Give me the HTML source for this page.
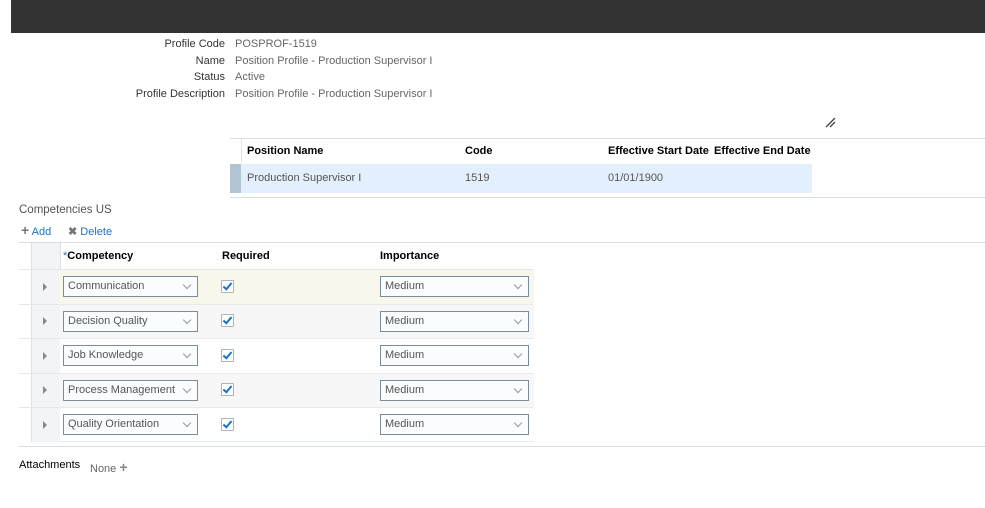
<!DOCTYPE html>
<html><head><style>
body{margin:0;width:985px;height:508px;background:#fff;font-family:"Liberation Sans",sans-serif;font-size:11px;position:relative;overflow:hidden}
.a{position:absolute;white-space:nowrap}
.lbl{color:#333;text-align:right;width:200px;left:25px}
.val{color:#666;left:235px}
.h{font-weight:bold;color:#000;font-size:11px}
.line{position:absolute;height:1px;background:#d6dfe6}
.sel{position:absolute;height:19px;border:1px solid #7a8c98;background:#fbfcfe;color:#555;font-size:11px;line-height:19px;padding-left:4px;box-sizing:content-box}
.sel:after{content:"";position:absolute;right:7px;top:5px;width:5px;height:5px;border-right:1px solid #999;border-bottom:1px solid #999;transform:rotate(45deg)}
.cb{position:absolute;width:11px;height:11px;border:1px solid #a9b4bd;background:#fff;border-radius:1px}
.cb:after{content:"";position:absolute;left:3px;top:0px;width:3px;height:7px;border-right:2px solid #1a73c9;border-bottom:2px solid #1a73c9;transform:rotate(40deg)}
.tri{position:absolute;width:0;height:0;border-left:4px solid #888;border-top:4px solid transparent;border-bottom:4px solid transparent}
</style></head><body>
<div style="position:absolute;left:11px;top:0;width:974px;height:33px;background:#333"></div>
<div class="a lbl" style="top:38px">Profile Code</div><div class="a val" style="top:38px">POSPROF-1519</div>
<div class="a lbl" style="top:55px">Name</div><div class="a val" style="top:55px">Position Profile - Production Supervisor I</div>
<div class="a lbl" style="top:71px">Status</div><div class="a val" style="top:71px">Active</div>
<div class="a lbl" style="top:88px">Profile Description</div><div class="a val" style="top:88px">Position Profile - Production Supervisor I</div>
<svg class="a" style="left:824px;top:116px" width="14" height="13"><path d="M2 11L11 2M6 11L11 6" stroke="#444" stroke-width="1.3"/></svg>
<div class="line" style="left:230px;top:138px;width:755px"></div>
<div class="a" style="left:241px;top:139px;width:1px;height:24px;background:#e3e7ea"></div>
<div class="a h" style="left:247px;top:145px">Position Name</div>
<div class="a h" style="left:465px;top:145px">Code</div>
<div class="a h" style="left:608px;top:145px">Effective Start Date</div>
<div class="a h" style="left:714px;top:145px">Effective End Date</div>
<div class="a" style="left:230px;top:164px;width:582px;height:29px;background:#e3effc"></div>
<div class="a" style="left:230px;top:164px;width:11px;height:29px;background:#b2c4d2"></div>
<div class="a" style="left:247px;top:172px;color:#555">Production Supervisor I</div>
<div class="a" style="left:465px;top:172px;color:#555">1519</div>
<div class="a" style="left:608px;top:172px;color:#555">01/01/1900</div>
<div class="line" style="left:230px;top:197px;width:755px"></div>
<div class="a" style="left:19px;top:204px;color:#555;font-size:11.5px">Competencies US</div>
<div class="a" style="left:21px;top:225px;color:#1a73c9"><span style="color:#777;font-weight:bold;font-size:14px;line-height:10px">+</span> Add</div>
<div class="a" style="left:68px;top:225px;color:#1a73c9"><span style="color:#777;font-weight:bold">✖</span> Delete</div>
<div class="line" style="left:19px;top:242px;width:966px"></div>
<div class="a" style="left:31px;top:243px;width:28px;height:199px;background:#f3f4f5;border-left:1px solid #dde2e6;border-right:1px solid #dde2e6"></div>
<div class="a h" style="left:63px;top:250px"><span style="color:#1a73c9;font-weight:normal">*</span>Competency</div>
<div class="a h" style="left:222px;top:250px">Required</div>
<div class="a h" style="left:380px;top:250px">Importance</div>
<div class="a" style="left:19px;top:269px;width:515px;height:1px;background:#e5e8eb"></div>

<div class="a" style="left:60px;top:270px;width:474px;height:34px;background:#f7f7eb;border-bottom:1px solid #e8eaec"></div>
<div class="a" style="left:60px;top:305px;width:474px;height:33px;background:#f7f7f7;border-bottom:1px solid #e8eaec"></div>
<div class="a" style="left:60px;top:339px;width:474px;height:34px;background:#fff;border-bottom:1px solid #e8eaec"></div>
<div class="a" style="left:60px;top:374px;width:474px;height:33px;background:#f7f7f7;border-bottom:1px solid #e8eaec"></div>
<div class="a" style="left:60px;top:408px;width:474px;height:33px;background:#fff;border-bottom:1px solid #e8eaec"></div>
<div class="a" style="left:19px;top:304px;width:40px;height:1px;background:#e5e8eb"></div>
<div class="a" style="left:19px;top:338px;width:40px;height:1px;background:#e5e8eb"></div>
<div class="a" style="left:19px;top:373px;width:40px;height:1px;background:#e5e8eb"></div>
<div class="a" style="left:19px;top:407px;width:40px;height:1px;background:#e5e8eb"></div>

<div class="tri" style="left:43px;top:283px"></div>
<div class="tri" style="left:43px;top:317px"></div>
<div class="tri" style="left:43px;top:352px"></div>
<div class="tri" style="left:43px;top:386px"></div>
<div class="tri" style="left:43px;top:421px"></div>

<div class="sel" style="left:63px;top:276px;width:129px">Communication</div>
<div class="sel" style="left:63px;top:311px;width:129px">Decision Quality</div>
<div class="sel" style="left:63px;top:345px;width:129px">Job Knowledge</div>
<div class="sel" style="left:63px;top:380px;width:129px">Process Management</div>
<div class="sel" style="left:63px;top:414px;width:129px">Quality Orientation</div>

<div class="cb" style="left:221px;top:280px"></div>
<div class="cb" style="left:221px;top:314px"></div>
<div class="cb" style="left:221px;top:349px"></div>
<div class="cb" style="left:221px;top:383px"></div>
<div class="cb" style="left:221px;top:418px"></div>

<div class="sel" style="left:380px;top:276px;width:143px">Medium</div>
<div class="sel" style="left:380px;top:311px;width:143px">Medium</div>
<div class="sel" style="left:380px;top:345px;width:143px">Medium</div>
<div class="sel" style="left:380px;top:380px;width:143px">Medium</div>
<div class="sel" style="left:380px;top:414px;width:143px">Medium</div>

<div class="line" style="left:19px;top:446px;width:966px"></div>
<div class="a" style="left:19px;top:459px;color:#000">Attachments</div>
<div class="a" style="left:90px;top:459px;color:#666">None <span style="color:#888;font-weight:bold;font-size:14px">+</span></div>
</body></html>
